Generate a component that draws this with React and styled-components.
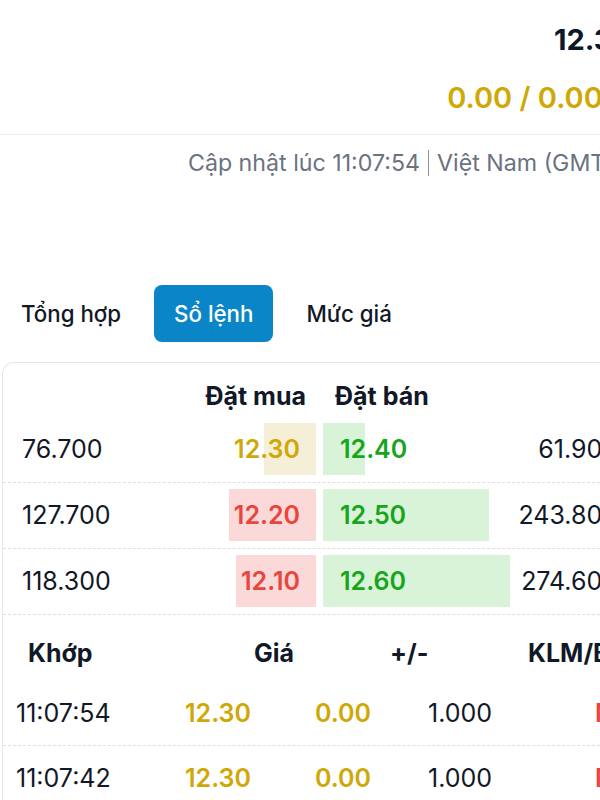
import styled, { createGlobalStyle } from 'styled-components'

const GlobalStyle = createGlobalStyle`
  html, body {
    margin: 0;
    padding: 0;
    background: #ffffff;
    overflow: hidden;
  }
  body {
    font-family: Inter, "Noto Sans", "Liberation Sans", sans-serif;
    font-variant-numeric: proportional-nums;
    color: #111827;
  }
`

// Colours
const YELLOW = '#cfa808'
const RED = '#e8453c'
const GREEN = '#17a51c'

const Page = styled.div`
  width: 640px;
`

const PriceHead = styled.div`
  display: flex;
  flex-direction: column;
  align-items: flex-end;
  padding: 23px 8px 19px 0;
  border-bottom: 1px solid #ececec;
`

const LastPrice = styled.div`
  font-size: 29px;
  font-weight: 700;
  line-height: 34px;
  color: #0f172a;
`

const Change = styled.div`
  margin-top: 24px;
  font-size: 29px;
  font-weight: 600;
  line-height: 34px;
  color: ${YELLOW};
`

const Updated = styled.div`
  display: flex;
  justify-content: flex-end;
  align-items: center;
  padding: 15px 0 0 0;
  font-size: 23.2px;
  line-height: 26px;
  color: #6b7280;
  white-space: nowrap;
`

const Divider = styled.span`
  display: inline-block;
  width: 1px;
  height: 26px;
  margin: 0 8px;
  background: #8b8f96;
`

const Tabs = styled.div`
  display: flex;
  gap: 13px;
  margin-top: 109px;
  padding-left: 1px;
`

const Tab = styled.button`
  height: 57px;
  padding: 0 20px;
  border: none;
  border-radius: 8px;
  font-family: inherit;
  font-size: 22.3px;
  font-weight: 500;
  background: ${p => (p.active ? '#0a86c8' : 'transparent')};
  color: ${p => (p.active ? '#ffffff' : '#111827')};
`

const Card = styled.div`
  margin: 20px 0 0 2px;
  border: 1px solid #e6e6e6;
  border-right: none;
  border-bottom: none;
  border-radius: 12px 0 0 0;
`

const BookHead = styled.div`
  display: grid;
  grid-template-columns: 313px 1fr;
  column-gap: 7px;
  padding: 19px 0 6px;
  font-size: 25px;
  font-weight: 700;
  line-height: 29px;
`

const HeadCell = styled.div`
  text-align: ${p => p.align};
  padding: ${p => (p.align === 'right' ? '0 10px 0 0' : '0 0 0 12px')};
`

const BookRow = styled.div`
  display: grid;
  grid-template-columns: 313px 1fr;
  column-gap: 7px;
  padding: 6px 0 7px;
  border-bottom: 1px dashed #dedede;
`

const Side = styled.div`
  position: relative;
  display: flex;
  justify-content: space-between;
  align-items: center;
  height: 52px;
  font-size: 25px;
`

const Bar = styled.div`
  position: absolute;
  top: 0;
  bottom: 0;
  ${p => (p.side === 'bid' ? 'right: 0;' : 'left: 0;')}
  background: ${p => p.bg};
`

const Volume = styled.span`
  position: relative;
  color: #111827;
  padding: ${p => (p.side === 'bid' ? '0 0 0 19px' : '0 22px 0 0')};
`

const Price = styled.span`
  position: relative;
  font-weight: 600;
  color: ${p => p.color};
  padding: ${p => (p.side === 'bid' ? '0 16px 0 0' : '0 0 0 17px')};
`

const TradeHead = styled.div`
  display: grid;
  grid-template-columns: 160px 131px 234px 1fr;
  padding: 24px 0 13px;
  font-size: 25px;
  font-weight: 700;
  line-height: 29px;
`

const TradeHeadCell = styled.div`
  text-align: ${p => p.align || 'left'};
  padding-left: ${p => p.pl || 0}px;
`

const TradeRow = styled.div`
  display: grid;
  grid-template-columns: 182px 130px 113px 167px 1fr;
  align-items: center;
  height: 64px;
  border-bottom: 1px dashed #dedede;
  font-size: 25px;
`

const Cell = styled.span`
  padding-left: ${p => p.pl || 0}px;
  color: ${p => p.color || '#111827'};
  font-weight: ${p => (p.bold ? 600 : 400)};
`

const SCALE = 0.68

const book = [
  { bidVol: '76.700', bid: '12.30', bidColor: YELLOW, bidBg: '#f6efd8', bidW: 76.7, ask: '12.40', askVol: '61.900', askW: 61.9 },
  { bidVol: '127.700', bid: '12.20', bidColor: RED, bidBg: '#fcd9d9', bidW: 127.7, ask: '12.50', askVol: '243.800', askW: 243.8 },
  { bidVol: '118.300', bid: '12.10', bidColor: RED, bidBg: '#fcd9d9', bidW: 118.3, ask: '12.60', askVol: '274.600', askW: 274.6 },
]

const trades = [
  { time: '11:07:54', price: '12.30', change: '0.00', vol: '1.000', side: 'M' },
  { time: '11:07:42', price: '12.30', change: '0.00', vol: '1.000', side: 'M' },
]

const App = () => {
  return (
    <Page>
      <GlobalStyle />
      <PriceHead>
        <LastPrice>12.30</LastPrice>
        <Change>0.00 / 0.00%</Change>
      </PriceHead>
      <Updated>
        Cập nhật lúc 11:07:54<Divider />Việt Nam (GMT+7)
      </Updated>

      <Tabs>
        <Tab>Tổng hợp</Tab>
        <Tab active>Sổ lệnh</Tab>
        <Tab>Mức giá</Tab>
      </Tabs>

      <Card>
        <BookHead>
          <HeadCell align="right">Đặt mua</HeadCell>
          <HeadCell align="left">Đặt bán</HeadCell>
        </BookHead>
        {book.map((r) => (
          <BookRow key={r.bid}>
            <Side>
              <Bar side="bid" bg={r.bidBg} style={{ width: r.bidW * SCALE }} />
              <Volume side="bid">{r.bidVol}</Volume>
              <Price side="bid" color={r.bidColor}>{r.bid}</Price>
            </Side>
            <Side>
              <Bar side="ask" bg="#d8f3d8" style={{ width: r.askW * SCALE }} />
              <Price side="ask" color={GREEN}>{r.ask}</Price>
              <Volume side="ask">{r.askVol}</Volume>
            </Side>
          </BookRow>
        ))}

        <TradeHead>
          <TradeHeadCell pl={25}>Khớp</TradeHeadCell>
          <TradeHeadCell align="right">Giá</TradeHeadCell>
          <TradeHeadCell pl={96}>+/-</TradeHeadCell>
          <TradeHeadCell>KLM/B</TradeHeadCell>
        </TradeHead>
        {trades.map((t) => (
          <TradeRow key={t.time}>
            <Cell pl={13}>{t.time}</Cell>
            <Cell color={YELLOW} bold>{t.price}</Cell>
            <Cell color={YELLOW} bold>{t.change}</Cell>
            <Cell>{t.vol}</Cell>
            <Cell color={RED} bold>{t.side}</Cell>
          </TradeRow>
        ))}
      </Card>
    </Page>
  )
}

export default App
